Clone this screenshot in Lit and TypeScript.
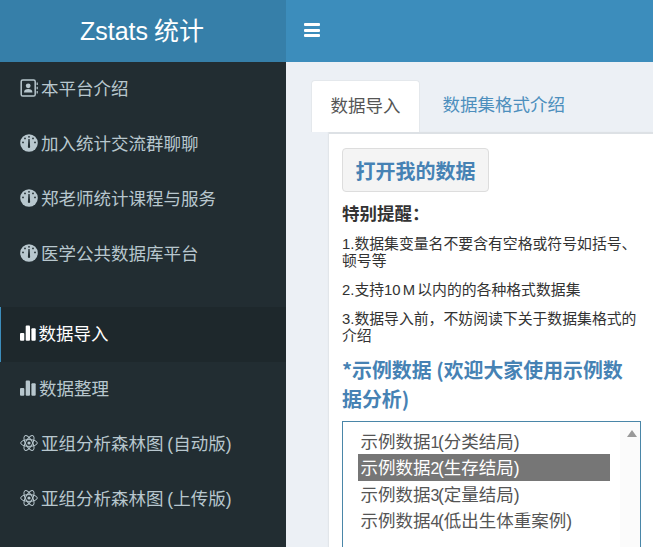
import { LitElement, html, css, svg } from "lit";
import { customElement } from "lit/decorators.js";

const gauge = svg`<svg class="ic" viewBox="0 0 18 18"><circle cx="9" cy="9" r="8.8" fill="currentColor"/><circle cx="9" cy="2.8" r=".9" fill="#222d32"/><circle cx="5" cy="4.4" r=".9" fill="#222d32"/><circle cx="13" cy="4.4" r=".9" fill="#222d32"/><circle cx="3" cy="8.4" r=".9" fill="#222d32"/><circle cx="15" cy="8.4" r=".9" fill="#222d32"/><path d="M8.4 5h1.2l.5 8a1.1 1.1 0 1 1-2.2 0z" fill="#222d32"/></svg>`;
const book = svg`<svg class="ic" viewBox="0 0 18 18"><rect x="1.2" y="1" width="14" height="16" rx="1.6" fill="none" stroke="currentColor" stroke-width="1.5"/><circle cx="8.2" cy="6.8" r="2.4" fill="currentColor"/><path d="M4 13.5c0-2.4 1.8-3.4 4.2-3.4s4.2 1 4.2 3.4z" fill="currentColor"/><path d="M16.6 3.5h1.2v2.6h-1.2zM16.6 7.7h1.2v2.6h-1.2zM16.6 11.9h1.2v2.6h-1.2z" fill="currentColor"/></svg>`;
const bars = svg`<svg class="ic bars" viewBox="0 0 16 16"><rect x="0" y="8" width="4.3" height="7.8" rx="1" fill="currentColor"/><rect x="5.7" y="0.5" width="4.3" height="15.3" rx="1" fill="currentColor"/><rect x="11.4" y="3.2" width="4.3" height="12.6" rx="1" fill="currentColor"/></svg>`;
const atom = svg`<svg class="ic" viewBox="0 0 18 18" fill="none" stroke="currentColor" stroke-width="1"><ellipse cx="9" cy="9" rx="8.3" ry="3.4"/><ellipse cx="9" cy="9" rx="8.3" ry="3.4" transform="rotate(60 9 9)"/><ellipse cx="9" cy="9" rx="8.3" ry="3.4" transform="rotate(120 9 9)"/><circle cx="9" cy="9" r="1.6" fill="currentColor" stroke="none"/></svg>`;

const topItems = [
  { icon: book, label: "本平台介绍", cls: "" },
  { icon: gauge, label: "加入统计交流群聊聊", cls: "" },
  { icon: gauge, label: "郑老师统计课程与服务", cls: "" },
  { icon: gauge, label: "医学公共数据库平台", cls: "" },
];
const lowerItems = [
  { icon: bars, label: "数据导入", cls: "active tight" },
  { icon: bars, label: "数据整理", cls: "tight" },
  { icon: atom, label: "亚组分析森林图 (自动版)", cls: "" },
  { icon: atom, label: "亚组分析森林图 (上传版)", cls: "" },
];
const options = [
  { n: "1", rest: "分类结局)" },
  { n: "2", rest: "生存结局)" },
  { n: "3", rest: "定量结局)" },
  { n: "4", rest: "低出生体重案例)" },
];

@customElement("app-root")
export class AppRoot extends LitElement {
  static styles = css`
    :host {
      display: block;
      height: 547px;
      overflow: hidden;
      font-family: "Liberation Sans", "Noto Sans CJK SC", sans-serif;
      color: #333;
    }
    .page {
      display: grid;
      grid-template-columns: 286px 1fr;
      grid-template-rows: 62px 1fr;
      height: 547px;
      background: #ecf0f5;
    }
    .logo {
      background: #367fa9;
      color: #fff;
      font-size: 25px;
      word-spacing: -1px;
      display: flex;
      align-items: center;
      justify-content: center;
      padding: 0 2px 4px 0;
    }
    .navbar {
      background: #3c8dbc;
      display: flex;
      align-items: center;
      padding: 0 0 2px 18px;
    }
    .burger {
      width: 16px;
      height: 14px;
      display: flex;
      flex-direction: column;
      justify-content: space-between;
    }
    .burger i {
      display: block;
      height: 3px;
      border-radius: 1px;
      background: #fff;
    }
    .side {
      background: #222d32;
      display: flex;
      flex-direction: column;
      overflow: hidden;
    }
    .group + .group {
      margin-top: 25px;
    }
    .item {
      height: 55px;
      display: flex;
      align-items: center;
      gap: 3px;
      padding: 0 0 3px 20px;
      box-sizing: border-box;
      color: #b8c7ce;
      font-size: 17.5px;
      word-spacing: -1px;
      white-space: nowrap;
    }
    .item span {
      padding-bottom: 2px;
    }
    .item.active {
      background: #1e282c;
      color: #fff;
      border-left: 1.5px solid #3c8dbc;
      padding-left: 18.5px;
    }
    .ic {
      width: 18px;
      height: 18px;
      flex: none;
    }
    .ic.bars {
      width: 16px;
      height: 16px;
    }
    .main {
      padding: 18px 0 0 25px;
      min-width: 0;
      overflow: hidden;
    }
    .tabs {
      display: flex;
      height: 52px;
      font-size: 17.5px;
    }
    .tab {
      padding: 0 0 5px 23px;
      display: flex;
      align-items: center;
      color: #4d8fbd;
    }
    .tab.on {
      background: #fff;
      color: #555;
      border-radius: 4px 4px 0 0;
      border: 1px solid #e4e8ec;
      border-bottom: 0;
      padding: 0 18px 5px 18.5px;
      width: 70px;
    }
    .panel {
      margin-left: 18px;
      background: #fff;
      border-top: 2px solid #dde1e5;
      box-shadow: -1px 0 1px #e2e6ea;
      padding: 14px 12px 0 13px;
      height: 420px;
      box-sizing: border-box;
    }
    .btn {
      width: 147px;
      height: 44px;
      box-sizing: border-box;
      display: flex;
      align-items: center;
      justify-content: center;
      font-size: 20px;
      font-weight: bold;
      color: #4682b4;
      background: #f4f4f4;
      border: 1px solid #ddd;
      border-radius: 4px;
    }
    .notice {
      font-size: 17.5px;
      font-weight: bold;
      color: #333;
      margin-top: 10px;
      line-height: 24px;
    }
    p {
      margin: 0;
      font-size: 14.85px;
      line-height: 17px;
      word-spacing: -2px;
      color: #333;
    }
    .notice + p {
      margin-top: 10px;
    }
    p + p {
      margin-top: 12px;
    }
    h4 {
      margin: 10px 0 0;
      font-family: "Noto Sans CJK SC", "Liberation Sans", sans-serif;
      font-size: 19.9px;
      line-height: 29px;
      font-weight: bold;
      color: #4682b4;
    }
    .list {
      margin-top: 7.5px;
      width: 299px;
      height: 200px;
      box-sizing: border-box;
      border: 1px solid #4a86a8;
      padding: 6px 0 0 15px;
      position: relative;
      font-size: 17.5px;
      color: #555;
    }
    .opt {
      width: 252px;
      box-sizing: border-box;
      height: 26.5px;
      line-height: 28.5px;
      padding-left: 2.5px;
      white-space: nowrap;
    }
    .opt.sel {
      background: #767676;
      color: #fff;
    }
    .num {
      font-size: 16px;
      margin-right: -1.5px;
    }
    .track {
      position: absolute;
      right: 0;
      top: 0;
      bottom: 0;
      width: 20px;
      background: #fbfbfb;
    }
    .arrow {
      position: absolute;
      right: 3px;
      top: 8px;
      width: 0;
      height: 0;
      border-left: 5px solid transparent;
      border-right: 5px solid transparent;
      border-bottom: 7px solid #9a9a9a;
    }
  `;

  render() {
    const row = (it: { icon: unknown; label: string; cls: string }) =>
      html`<div class="item ${it.cls}">${it.icon}<span>${it.label}</span></div>`;
    return html`
      <div class="page">
        <div class="logo">Zstats 统计</div>
        <div class="navbar">
          <div class="burger"><i></i><i></i><i></i></div>
        </div>
        <nav class="side">
          <div class="group">${topItems.map(row)}</div>
          <div class="group">${lowerItems.map(row)}</div>
        </nav>
        <main class="main">
          <div class="tabs">
            <div class="tab on">数据导入</div>
            <div class="tab">数据集格式介绍</div>
          </div>
          <section class="panel">
            <div class="btn">打开我的数据</div>
            <div class="notice">特别提醒：</div>
            <p>1.数据集变量名不要含有空格或符号如括号、顿号等</p>
            <p>2.支持10 M 以内的的各种格式数据集</p>
            <p>3.数据导入前，不妨阅读下关于数据集格式的介绍</p>
            <h4>*示例数据 (欢迎大家使用示例数据分析)</h4>
            <div class="list">
              ${options.map(
                (o, i) =>
                  html`<div class="opt ${i === 1 ? "sel" : ""}">示例数据<span class="num">${o.n}</span>(${o.rest}</div>`
              )}
              <div class="track"><div class="arrow"></div></div>
            </div>
          </section>
        </main>
      </div>
    `;
  }
}
